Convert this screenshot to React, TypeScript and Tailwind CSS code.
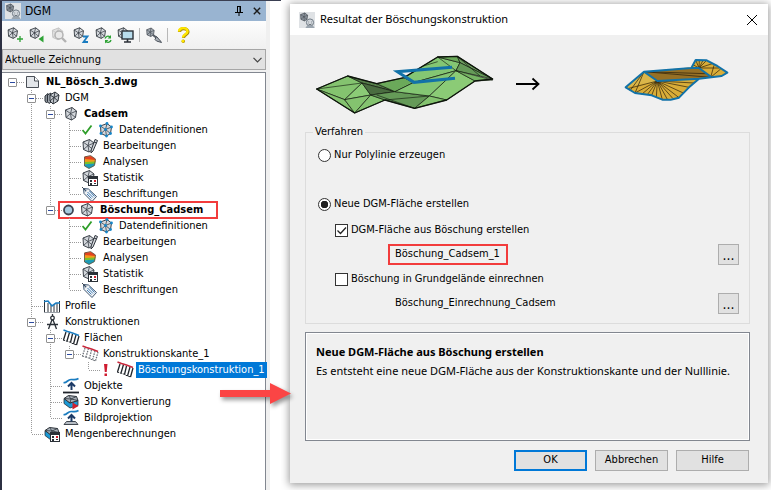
import React from 'react';

type IconName =
  | 'file' | 'dgm' | 'tin' | 'tinPoints' | 'edit' | 'analyse' | 'stats' | 'tag'
  | 'profile' | 'compass' | 'hatchBlue' | 'hatchGray' | 'hatchRed'
  | 'object' | 'convert' | 'projection' | 'volume';

interface TreeNode {
  label: string;
  icon: IconName;
  // one character per column: blank, | line, T branch, L last branch
  guides: string;
  open?: boolean;
  bold?: boolean;
  state?: 'check' | 'dot' | 'alert';
  selected?: boolean;
  marked?: boolean;
}

const nodes: TreeNode[] = [
  { label: 'NL_Bösch_3.dwg', icon: 'file', guides: '-', open: true, bold: true },
  { label: 'DGM', icon: 'dgm', guides: ' T', open: true },
  { label: 'Cadsem', icon: 'tin', guides: ' |T', open: true, bold: true },
  { label: 'Datendefinitionen', icon: 'tinPoints', guides: ' ||T', state: 'check' },
  { label: 'Bearbeitungen', icon: 'edit', guides: ' ||T' },
  { label: 'Analysen', icon: 'analyse', guides: ' ||T' },
  { label: 'Statistik', icon: 'stats', guides: ' ||T' },
  { label: 'Beschriftungen', icon: 'tag', guides: ' ||L' },
  { label: 'Böschung_Cadsem', icon: 'tin', guides: ' |L', open: true, bold: true, state: 'dot', marked: true },
  { label: 'Datendefinitionen', icon: 'tinPoints', guides: ' | T', state: 'check' },
  { label: 'Bearbeitungen', icon: 'edit', guides: ' | T' },
  { label: 'Analysen', icon: 'analyse', guides: ' | T' },
  { label: 'Statistik', icon: 'stats', guides: ' | T' },
  { label: 'Beschriftungen', icon: 'tag', guides: ' | L' },
  { label: 'Profile', icon: 'profile', guides: ' T' },
  { label: 'Konstruktionen', icon: 'compass', guides: ' T', open: true },
  { label: 'Flächen', icon: 'hatchBlue', guides: ' |T', open: true },
  { label: 'Konstruktionskante_1', icon: 'hatchGray', guides: ' ||L', open: true },
  { label: 'Böschungskonstruktion_1', icon: 'hatchRed', guides: ' || L', state: 'alert', selected: true },
  { label: 'Objekte', icon: 'object', guides: ' |T' },
  { label: '3D Konvertierung', icon: 'convert', guides: ' |T' },
  { label: 'Bildprojektion', icon: 'projection', guides: ' |L' },
  { label: 'Mengenberechnungen', icon: 'volume', guides: ' L' },
];

// Small triangulated surface, base shape of most icons
const Mesh = ({ fill = '#d3d7dc', stroke = '#3a4048' }: { fill?: string; stroke?: string }) => (
  <g stroke={stroke} strokeWidth="1" strokeLinejoin="round">
    <path d="M2.500 4L9 1.500l4.500 3.500-1 6.500L8.500 14l-5.500-2.500z" fill={fill} />
    <path d="M2.500 4L7.500 7.500 9 1.500M7.500 7.500l6-2.500M7.500 7.500l5 4M7.500 7.500l1 6.500M7.500 7.500L3 11.500" fill="none" strokeWidth="0.8" />
  </g>
);

const Block = () => (
  <g strokeLinejoin="round">
    <path d="M1 4.5v5L7 14l8-2.5v-5L7 9z" fill="#1a9ad6" stroke="#2b3138" strokeWidth="0.8" />
    <path d="M1 4.5L5.500 1.500 13.500 2.500 15 6.500 7 9z" fill="#aab2ba" stroke="#2b3138" />
    <path d="M1 4.500L8 5l5.500-2.500M5.500 1.500L8 5l7 1.500M8 5L7 9" fill="none" stroke="#2b3138" strokeWidth="0.8" />
  </g>
);

const Calculator = () => (
  <g>
    <rect x="6.500" y="6.500" width="9" height="9" fill="#fff" stroke="#2b3138" />
    <path d="M6 6h10v3H6z" fill="#2b3138" />
    <path d="M8 10h2v2H8zM8 13h2v2H8zM12 13h2v1h-2z" fill="#2b3138" />
    <path d="M12 10h2v2h-2z" fill="#d0202e" />
  </g>
);

const Hatch = ({ top, line, dash }: { top: string; line: string; dash?: string }) => (
  <g fill="none">
    <path d="M3 2L.5 10M6.500 2.500L4 11M9.500 4L7.500 12.500M13 5L10.500 14M16 6L13.500 15" stroke={line} strokeWidth="1.300" strokeDasharray={dash} />
    <path d="M0 10l3 1 3.500 1 4 2 3.500 1" stroke={line} strokeDasharray="2 1" />
    <path d="M.5 0l4 1.500 5 1.500 6.500 2.500" stroke={top} strokeWidth="1.500" />
  </g>
);

const TreeIcon = ({ name }: { name: IconName }) => (
  <svg viewBox="0 0 16 16" className="h-4 w-4 shrink-0 overflow-visible" aria-hidden="true">
    {name === 'file' && (
      <>
        <path d="M1.500 2.500h8l4 4.500v6.500h-12z" fill="#e3e6ea" stroke="#4a4f57" />
        <path d="M9.500 2.500V7h4" fill="#fff" stroke="#4a4f57" />
      </>
    )}
    {name === 'dgm' && (
      <g stroke="#2b3138" strokeLinejoin="round">
        <path d="M1 6l3-2.500v8L2.500 13 1 11z" fill="#8b929a" />
        <path d="M3.500 5L7 3v9l-2 1.500-1.500-2z" fill="#9ea5ad" />
        <path d="M6 5l5-3 4 3-1 6-5 3-3-3z" fill="#c3c8ce" />
        <path d="M6 5l4 2.500L11 2m-1 5.500L15 5m-5 2.500l4 3.500m-4-3.500L9 14m1-6.500L6 11" fill="none" strokeWidth="0.900" />
      </g>
    )}
    {name === 'tin' && <Mesh />}
    {name === 'tinPoints' && (
      <>
        <Mesh />
        {[[2.5, 4], [9, 1.5], [13.5, 5], [12.5, 11.5], [8.5, 14], [3, 11.5], [7.5, 7.5]].map(([x, y]) => (
          <circle key={`${x}-${y}`} cx={x} cy={y} r="1.400" fill="#1686c9" />
        ))}
      </>
    )}
    {name === 'edit' && (
      <>
        <g transform="translate(-1.500 0)"><Mesh /></g>
        <path d="M13 1.500l2.500 1L11 13l-2 2 .2-3z" fill="#d6d9dd" stroke="#30363e" />
        <path d="M12 4l2.500 1" stroke="#30363e" />
      </>
    )}
    {name === 'analyse' && (
      <>
        <path d="M2.500 2.500L9 2l4.500 3-.5 1H2.500z" fill="#e3431f" />
        <path d="M2.500 5L13.500 6v2H2.500z" fill="#f49a1a" />
        <path d="M2.500 8L13.500 7.500 13 10l-10.500.500z" fill="#7cc12a" />
        <path d="M2.500 10.200L13 9.500 12 12l-5 2.500-4.500-2.500z" fill="#1d9bb5" />
        <path d="M2.500 3L8.500 1.500l5 3.500-1 6.500-5.500 3-4.500-2.500z" fill="none" stroke="#5b4a35" strokeWidth="0.800" />
      </>
    )}
    {name === 'stats' && (
      <>
        <g transform="translate(-1.500 -1)"><Mesh /></g>
        <Calculator />
      </>
    )}
    {name === 'tag' && (
      <g strokeLinejoin="round">
        <path d="M1.500 2.500l5 .5 8 7.500-4.500 5L2 7.500z" fill="#eef1f4" stroke="#3c5470" />
        <path d="M5.500 6l5.500 5.500M7.500 5l5 5.500M5 8l4.500 4.500" stroke="#2d70b0" strokeWidth="0.900" />
        <circle cx="3.500" cy="4.500" r="0.900" fill="#3c5470" />
        <path d="M0 1l3 3" stroke="#3c4652" />
      </g>
    )}
    {name === 'profile' && (
      <g fill="none">
        <path d="M.5 2v13M4 5v10M7 7v8M10 6v9M13 5v10M15.500 3v12" stroke="#2b3138" />
        <path d="M0 3.500L4 3l4 5 4-3h4" stroke="#1a7cc0" strokeWidth="1.600" />
        <path d="M0 14.500h16" stroke="#9aa0a7" />
      </g>
    )}
    {name === 'compass' && (
      <g fill="none" stroke="#2b3138" strokeWidth="1.300">
        <path d="M8.500 0v2M8.500 4.500L4.500 15M8.500 4.500l4 10.500M3 10.500h11" />
        <circle cx="8.500" cy="4" r="1.800" fill="#fff" />
      </g>
    )}
    {name === 'hatchBlue' && <Hatch top="#1a7cc0" line="#20252b" />}
    {name === 'hatchGray' && <Hatch top="#c8283c" line="#6d7279" dash="1.500 1" />}
    {name === 'hatchRed' && <Hatch top="#c8283c" line="#20252b" />}
    {name === 'object' && (
      <g fill="none">
        <path d="M.5 4.500C3.500 5.500 4.500 1.500 8 1.500s4 1 7.500-1" stroke="#1a7cc0" strokeWidth="1.700" />
        <path d="M8.500 12V6M5 8.500L8.500 5 12 8.500" stroke="#1b3a66" strokeWidth="2" />
        <path d="M0 14.500h16" stroke="#20252b" strokeWidth="1.800" />
      </g>
    )}
    {name === 'convert' && (
      <>
        <Block />
        <path d="M9.500 8.500l6 3.500-6 3.500z" fill="#d0202e" />
      </>
    )}
    {name === 'projection' && (
      <g fill="none">
        <path d="M.5 4.500C3.500 5.500 4.500 1.500 8 1.500s4 1 7.500-1" stroke="#1a7cc0" strokeWidth="1.700" />
        <path d="M3.500 11.500h9l2.500 3H1z" fill="#b5bcc4" stroke="#30363e" strokeWidth="0.900" />
        <path d="M8.500 11.500V6M5 8.500L8.500 5 12 8.500" stroke="#1b3a66" strokeWidth="2" />
      </g>
    )}
    {name === 'volume' && (
      <>
        <Block />
        <Calculator />
      </>
    )}
  </svg>
);

const StateIcon = ({ state }: { state: NonNullable<TreeNode['state']> }) => (
  <svg viewBox="0 0 16 16" className="h-4 w-4 shrink-0" aria-hidden="true">
    {state === 'check' && <path d="M.5 8l3 3.500L9.500 3.500" fill="none" stroke="#2f9e2a" strokeWidth="1.800" />}
    {state === 'dot' && <circle cx="5.500" cy="8" r="4.500" fill="#a6cbe0" stroke="#3d4552" strokeWidth="1.800" />}
    {state === 'alert' && <path d="M3 2h3.500L5.700 10H3.800zM3.500 11.500h2.500V14H3.500z" fill="#cf1c30" />}
  </svg>
);

const Guide = ({ kind, open }: { kind: string; open?: boolean }) => (
  <span className="relative flex h-4 w-[19px] shrink-0 items-center justify-center">
    <svg viewBox="0 0 19 16" className="absolute inset-0 h-4 w-[19px] overflow-visible" aria-hidden="true">
      <g stroke="#9a9a9a" strokeDasharray="1 1" fill="none">
        {(kind === '|' || kind === 'T') && <path d="M9.500 0v16" />}
        {kind === 'L' && <path d="M9.500 0v8" />}
        {kind !== '|' && kind !== ' ' && <path d="M10 8.500h11" />}
      </g>
    </svg>
    {open && (
      <button
        type="button"
        aria-label="Zuklappen"
        className="relative flex h-[9px] w-[9px] items-center justify-center rounded-[1px] border border-[#919191] bg-white"
      >
        <span className="h-px w-[5px] bg-[#2c4aa0]" />
      </button>
    )}
  </span>
);

const TreeRow = ({ node }: { node: TreeNode }) => {
  const cols = node.guides.split('');
  return (
    <li
      role="treeitem"
      aria-expanded={node.open}
      aria-selected={!!node.selected}
      className="relative flex h-4 items-center whitespace-nowrap"
    >
      {cols.map((kind, i) => (
        <Guide key={i} kind={kind} open={node.open && i === cols.length - 1} />
      ))}
      <span className="flex items-center pl-[3px]">
        {node.state && <StateIcon state={node.state} />}
        <TreeIcon name={node.icon} />
      </span>
      <span
        className={`ml-[3px] h-4 px-[2px] leading-4 ${node.bold ? 'font-bold' : ''} ${
          node.selected ? 'bg-[#0078d7] text-white' : ''
        }`}
      >
        {node.label}
      </span>
      {node.marked && (
        <span className="pointer-events-none absolute -top-px left-[55px] h-[18px] w-40 border-2 border-[#f23c3c]" />
      )}
    </li>
  );
};

const AppIcon = () => (
  <svg viewBox="0 0 16 16" className="h-4 w-4 shrink-0" aria-hidden="true">
    <rect width="16" height="16" fill="#dfe2e5" />
    <g transform="scale(.64)"><Mesh fill="#8e969f" /></g>
    <circle cx="11" cy="10.500" r="3.600" fill="#d3d8dd" stroke="#6f7a85" />
    <path d="M9.500 10h.6M12 10h.6M9.500 12c1 .8 2 .8 3 0" stroke="#4a525b" strokeWidth="0.900" fill="none" />
    <path d="M6.500 16c.5-2 2-2.500 4.500-2.500s4 .500 4.500 2.500z" fill="#9ba5af" />
  </svg>
);

const ToolButton = ({ label, children }: { label: string; children: React.ReactNode }) => (
  <button type="button" aria-label={label} className="flex h-6 w-[22px] items-center justify-center hover:bg-sky-100">
    <svg viewBox="0 0 18 18" className="h-[18px] w-[18px]" aria-hidden="true">
      {children}
    </svg>
  </button>
);

const ToolMesh = () => <g transform="translate(0 .5) scale(.85)"><Mesh stroke="#2b3138" /></g>;

const Toolbar = () => (
  <div role="toolbar" className="flex h-7 items-center bg-linear-to-b from-[#fdfdfd] to-[#f0f0f0] pl-[2px]">
    <ToolButton label="Neu">
      <ToolMesh />
      <path d="M14 10v6M11 13h6" stroke="#2ea336" strokeWidth="1.300" />
    </ToolButton>
    <ToolButton label="Importieren">
      <ToolMesh />
      <path d="M10.500 13l5-3.500v7z" fill="#2ea336" />
    </ToolButton>
    <ToolButton label="Suchen">
      <g transform="translate(0 .5) scale(.95)"><Mesh fill="#e2e2e2" stroke="#c2c2c2" /></g>
      <circle cx="9" cy="9" r="4" fill="#e9e9e9" stroke="#b2b2b2" strokeWidth="1.500" />
      <path d="M12 12l4 4" stroke="#b2b2b2" strokeWidth="2.400" />
    </ToolButton>
    <ToolButton label="Höhen">
      <ToolMesh />
      <path d="M11 10.500h4.500L11.500 16H16" fill="none" stroke="#1a7cc0" strokeWidth="1.800" />
    </ToolButton>
    <ToolButton label="Aktualisieren">
      <ToolMesh />
      <path d="M11 12.500a3 3 0 015-1.500M17 14a3 3 0 01-5 1.500" fill="none" stroke="#2ea336" strokeWidth="1.300" />
      <path d="M17 9v3.500h-3.500zM11 17.500V14h3.500z" fill="#2ea336" />
    </ToolButton>
    <ToolButton label="Anzeigen">
      <ToolMesh />
      <rect x="6" y="5" width="11" height="8" fill="#b8dcec" stroke="#2b3138" strokeWidth="1.400" />
      <path d="M11.500 13v3M8 16h7" stroke="#2b3138" strokeWidth="1.600" />
    </ToolButton>
    <span className="ml-[3px] h-[14px] w-px bg-[#b8b8b8]" />
    <span className="ml-[3px] flex">
      <ToolButton label="Einstellungen">
        <g transform="translate(0 1) scale(.68)"><Mesh fill="#a3aab2" /></g>
        <path d="M8 9l4.500 3.500" stroke="#555c65" strokeWidth="2.200" />
        <path d="M11.500 10.500l4 4.500 1 1.500-5-1.500-1.500-1.500z" fill="#a9afb6" stroke="#4b525b" />
      </ToolButton>
    </span>
    <span className="ml-[2px] h-[14px] w-px bg-[#b8b8b8]" />
    <span className="ml-1 flex">
      <ToolButton label="Hilfe">
        <path d="M5.500 6c0-4.500 8.500-4.500 8.500 0 0 3-4.500 2.500-4.500 6" fill="none" stroke="#a88a08" strokeWidth="3.200" />
        <path d="M5 5.500c0-4.500 8.500-4.500 8.500 0 0 3-4.500 2.500-4.500 6" fill="none" stroke="#ffe600" strokeWidth="2.400" />
        <circle cx="9.300" cy="15.300" r="1.700" fill="#a88a08" />
        <circle cx="9" cy="15" r="1.500" fill="#ffe600" />
      </ToolButton>
    </span>
  </div>
);

const TreePanel = () => (
  <aside className="flex w-[281px] shrink-0 border-t border-[#3a3f52] bg-white">
    <div className="flex w-[270px] flex-col border-l-2 border-[#2c3042] bg-[#f0f0f0] pr-1">
      <div className="flex h-5 items-center bg-[#99b4d1] pl-[3px]">
        <AppIcon />
        <h2 className="ml-1 grow text-xs">DGM</h2>
        <button type="button" aria-label="Anheften" className="mr-[10px]">
          <svg viewBox="0 0 8 10" className="h-[10px] w-2" fill="none" stroke="#000">
            <path d="M2.500 0v6M5.500 0v6M2 .5h4M0 6.500h8M4 7v3" />
            <path d="M5 0v6" />
          </svg>
        </button>
        <button type="button" aria-label="Schließen" className="mr-[5px]">
          <svg viewBox="0 0 8 8" className="h-2 w-2" fill="none" stroke="#1c1c1c" strokeWidth="1.400">
            <path d="M.8.8l6.400 6.400M7.200.8L.8 7.200" />
          </svg>
        </button>
      </div>
      <Toolbar />
      <label className="relative block">
        <span className="sr-only">Zeichnung</span>
        <select className="block h-[21px] w-full appearance-none border border-[#a6a6a6] bg-[#e1e1e1] py-0 pr-4 pl-[2px] leading-[19px]">
          <option>Aktuelle Zeichnung</option>
        </select>
        <svg viewBox="0 0 9 6" className="pointer-events-none absolute top-2 right-1 h-1.5 w-[9px]" fill="none" stroke="#444" strokeWidth="1.200">
          <path d="M.5.8l4 4 4-4" />
        </svg>
      </label>
      <ul role="tree" className="mt-0.5 grow border border-b-0 border-l-0 border-[#828790] bg-white pt-px pb-4 pl-px">
        {nodes.map((node, i) => (
          <TreeRow key={i} node={node} />
        ))}
      </ul>
    </div>
  </aside>
);

const GreenSurface = () => (
  <svg viewBox="108 162 540 180" className="h-[60px] w-[180px]" aria-hidden="true">
    <g stroke="#0d150b" strokeWidth="2" strokeLinejoin="round">
      <path d="M110 267L203 228 246 249 194 299z" fill="#84c36f" />
      <path d="M110 267L194 299 224 339z" fill="#84c36f" />
      <path d="M194 299L246 249 272 285z" fill="#8bcb76" />
      <path d="M194 299L272 285 224 339z" fill="#84c36f" />
      <path d="M272 285L315 300 224 339z" fill="#84c36f" />
      <path d="M203 228L290 251 345 275 246 249z" fill="#557d49" />
      <path d="M246 249L345 275 272 285z" fill="#4a6d40" />
      <path d="M272 285L345 275 448 288 404 325 315 300z" fill="#659a58" />
      <path d="M290 251L372 233 400 248 345 275z" fill="#6ba95a" />
      <path d="M372 233L473 171 540 188 528 212 400 248z" fill="#84c673" />
      <path d="M473 171L532 169 540 188z" fill="#6ba95a" />
      <path d="M345 275L400 248 528 212 448 288z" fill="#84c673" />
      <path d="M448 288L528 212 585 243 500 300z" fill="#8bcb76" />
      <path d="M404 325L448 288 500 300z" fill="#84c36f" />
      <path d="M532 169L638 237 540 188z" fill="#6f9f60" />
      <path d="M540 188L638 237 528 212z" fill="#659a58" />
      <path d="M528 212L638 240 585 243z" fill="#76b464" />
    </g>
    <g stroke="#172314" strokeWidth="2" fill="none">
      <path d="M110 267L246 249M290 285L404 325M315 300L448 288M430 198L473 185M473 171L528 212M532 169L600 228" />
    </g>
    <path d="M110 267L203 228 290 251 372 233 473 171 532 169 638 237 585 243 500 300 404 325 315 300 224 339z" fill="none" stroke="#0d150b" strokeWidth="4" strokeLinejoin="round" />
    <path d="M516 202L352 215 402 247 525 235" fill="none" stroke="#1272a8" strokeWidth="9" />
  </svg>
);

const OrangeSurface = () => (
  <svg viewBox="315 171 324 144" className="h-12 w-[108px]" aria-hidden="true">
    <path d="M320 262L375 215 517 202 530 180 563 181 625 218 608 228 540 236 480 293 430 299 398 286 348 279z" fill="#d9ad38" />
    <path d="M375 215L415 243 320 262z" fill="#dab64a" />
    <path d="M375 215L540 204 575 232 415 243z" fill="#967025" />
    <path
      d="M375 215L333 272M375 215L348 279M415 243L330 265M415 243L348 279M415 243L368 283M415 243L385 284M415 243L398 286M415 243L412 292M415 243L430 299M415 243L445 298M415 243L462 296M415 243L480 293M415 243L495 280M415 243L510 262M415 243L525 249M375 215L560 221M375 215L575 232M540 204L522 194M540 204L530 180M540 204L541 181M540 204L552 181M540 204L563 181M540 204L580 191M540 204L600 204M575 232L585 196M575 232L605 207"
      fill="none"
      stroke="#241a08"
      strokeWidth="2"
    />
    <path
      d="M320 262L375 215 517 204 530 180 563 181 595 198 625 218 608 228 540 236 510 262 480 293 455 299 430 299 398 286 348 279zM375 215L415 243 540 236M517 204H540L575 230"
      fill="none"
      stroke="#1272a8"
      strokeWidth="6"
      strokeLinejoin="round"
    />
  </svg>
);

const boxClass =
  'h-[13px] w-[13px] shrink-0 appearance-none border border-[#333] bg-white';

const DotsButton = () => (
  <button type="button" aria-label="Auswählen" className="h-[21px] w-[21px] shrink-0 border border-[#adadad] bg-[#e1e1e1] text-sm leading-4">
    ...
  </button>
);

const FooterButton = ({ label, primary }: { label: string; primary?: boolean }) => (
  <button
    type="button"
    className={`h-[21px] w-[73px] bg-[#e1e1e1] ${primary ? 'border-2 border-[#0078d7]' : 'border border-[#adadad]'}`}
  >
    {label}
  </button>
);

const ResultDialog = () => (
  <section
    role="dialog"
    aria-labelledby="dialog-title"
    className="mt-1 mr-[3px] mb-2 ml-[9px] flex grow flex-col bg-[#f0f0f0] shadow-[0_1px_8px_1px_rgba(0,0,0,0.4)]"
  >
    <header className="flex h-[31px] items-center bg-white pr-[11px] pl-[9px]">
      <AppIcon />
      <h1 id="dialog-title" className="ml-[5px] grow font-['Noto_Sans',sans-serif]">
        Resultat der Böschungskonstruktion
      </h1>
      <button type="button" aria-label="Schließen">
        <svg viewBox="0 0 10 10" className="h-[10px] w-[10px]" fill="none" stroke="#000">
          <path d="M0 0l10 10M10 0L0 10" />
        </svg>
      </button>
    </header>

    <div className="flex items-start justify-between pt-[19px] pr-9 pl-[26px]">
      <GreenSurface />
      <svg viewBox="0 0 24 14" className="mt-[23px] h-[14px] w-6" fill="none" stroke="#000" strokeWidth="1.800" aria-hidden="true">
        <path d="M0 7h22M16.500 1.500L22.500 7l-6 5.500" />
      </svg>
      <span className="mt-[3px] ml-16"><OrangeSurface /></span>
    </div>

    <fieldset className="mr-[18px] ml-[15px] mt-[11px] min-w-0 border border-[#dcdcdc] pr-[10px] pb-[9px] pl-3">
      <legend className="-ml-[5px] px-0.5 leading-[14px]">Verfahren</legend>
      <label className="mt-2 flex h-4 items-center gap-[3px]">
        <input type="radio" name="mode" className={`${boxClass} rounded-full`} />
        Nur Polylinie erzeugen
      </label>
      <label className="mt-[33px] flex h-4 items-center gap-[3px]">
        <input
          type="radio"
          name="mode"
          defaultChecked
          className={`${boxClass} rounded-full checked:bg-[radial-gradient(circle,#222_0_3.500px,#fff_4px)]`}
        />
        Neue DGM-Fläche erstellen
      </label>
      <div className="pl-[17px]">
        <label className="mt-[10px] flex h-4 items-center gap-[3px]">
          <span className="relative flex">
            <input type="checkbox" defaultChecked className={boxClass} />
            <svg viewBox="0 0 13 13" className="pointer-events-none absolute inset-0 h-[13px] w-[13px]" fill="none" stroke="#222" strokeWidth="1.300">
              <path d="M2.500 6.500l3 3 5.500-6" />
            </svg>
          </span>
          DGM-Fläche aus Böschung erstellen
        </label>
        <div className="mt-1.5 flex items-center justify-between pl-[53px]">
          <output className="flex h-[21px] w-[120px] items-center border-2 border-[#f23c3c] pl-[5px]">
            Böschung_Cadsem_1
          </output>
          <DotsButton />
        </div>
        <label className="mt-1.5 flex h-4 items-center gap-[3px]">
          <input type="checkbox" className={boxClass} />
          Böschung in Grundgelände einrechnen
        </label>
        <div className="mt-1.5 flex items-center justify-between pl-[60px]">
          <output>Böschung_Einrechnung_Cadsem</output>
          <DotsButton />
        </div>
      </div>
    </fieldset>

    <div className="mr-[18px] ml-[15px] mt-2 h-[109px] border border-[#828790] px-[10px] pt-[10px] font-['Noto_Sans',sans-serif] shadow-[inset_0_0_0_1px_#fff]">
      <h3 className="leading-[18px] font-bold">Neue DGM-Fläche aus Böschung erstellen</h3>
      <p className="leading-5">
        Es entsteht eine neue DGM-Fläche aus der Konstruktionskante und der Nulllinie.
      </p>
    </div>

    <footer className="mt-[9px] flex justify-end gap-2 pr-[19px] pb-3">
      <FooterButton label="OK" primary />
      <FooterButton label="Abbrechen" />
      <FooterButton label="Hilfe" />
    </footer>
  </section>
);

export default function App() {
  return (
    <main className="relative flex min-h-screen overflow-hidden bg-white font-['DejaVu_Sans_Condensed','Noto_Sans',sans-serif] text-[11px] text-black">
      <TreePanel />
      <div className="flex min-w-0 grow overflow-hidden">
        <ResultDialog />
      </div>
      <svg
        viewBox="0 0 76 32"
        className="pointer-events-none absolute top-[378px] left-[218px] h-8 w-[76px] drop-shadow-[2px_3px_2px_rgba(0,0,0,0.4)]"
        aria-hidden="true"
      >
        <path d="M2 12h50V5l21 10.500L52 26v-7H2z" fill="#fb4545" />
      </svg>
    </main>
  );
}
